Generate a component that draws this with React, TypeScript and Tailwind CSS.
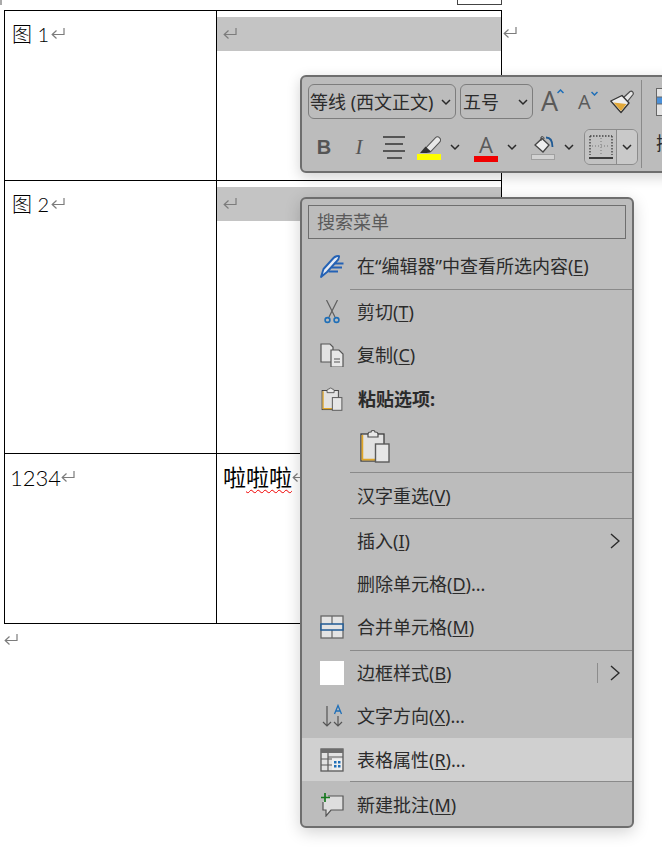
import React from 'react';

const UI_FONT = "font-['Noto_Sans','Noto_Sans_CJK_SC',sans-serif]";

function ReturnMark({ className = '' }: { className?: string }) {
  return (
    <svg className={`w-[14px] h-[14px] shrink-0 ${className}`} viewBox="0 0 14 14" fill="none" stroke="#7c7c7c" strokeWidth="1.2">
      <path d="M13 1 V7.5 H1.5" />
      <path d="M5.5 3.5 L1.2 7.5 L5.5 11.5" />
    </svg>
  );
}

function Chevron({ className = '' }: { className?: string }) {
  return (
    <svg className={`w-[10px] h-[8px] shrink-0 ${className}`} viewBox="0 0 10 8" fill="none" stroke="#2a2a2a" strokeWidth="1.5">
      <path d="M1 2 L5 6 L9 2" />
    </svg>
  );
}

function SubArrow() {
  return (
    <svg className="w-[10px] h-[16px]" viewBox="0 0 10 16" fill="none" stroke="#2a2a2a" strokeWidth="1.4">
      <path d="M1 1 L9 8 L1 15" />
    </svg>
  );
}

function PenIcon() {
  return (
    <svg className="w-6 h-6" viewBox="0 0 24 24" fill="none">
      <path d="M1 23 L3.5 15 L13.5 4 C15 2.5 18 1.5 19 2 C19.5 4 18 6 16 8 L7 18 Z" fill="#e6ecf5" stroke="#2462b5" strokeWidth="1.9" strokeLinejoin="round" />
      <path d="M14.5 9.5 H23.5 M11.5 13.5 H22 M8.5 17.5 H18" stroke="#2462b5" strokeWidth="2" />
    </svg>
  );
}

function ScissorsIcon() {
  return (
    <svg className="w-6 h-6" viewBox="0 0 24 24" fill="none">
      <path d="M6.5 0 L15 17 M17.5 0 L9 17" stroke="#5f5f5f" strokeWidth="1.2" />
      <circle cx="7.5" cy="20" r="2.4" stroke="#1f6fb8" strokeWidth="1.6" />
      <circle cx="16.5" cy="20" r="2.4" stroke="#1f6fb8" strokeWidth="1.6" />
    </svg>
  );
}

function CopyIcon() {
  return (
    <svg className="w-6 h-6" viewBox="0 0 24 24" fill="none">
      <path d="M1 1 H10 L13 4 V19 H1 Z" fill="#e2e2e2" stroke="#555" strokeWidth="1.2" />
      <path d="M11 7 H19 L23 11 V24 H11 Z" fill="#e8e8e8" stroke="#555" strokeWidth="1.2" />
      <path d="M14 16 H20 M14 19 H20" stroke="#555" strokeWidth="1.1" />
    </svg>
  );
}

function PasteIcon({ className }: { className: string }) {
  return (
    <svg className={className} viewBox="0 0 30 34" fill="none">
      <rect x="1" y="5" width="23" height="27" fill="#e2e2e2" stroke="#3c3c3c" strokeWidth="1.3" />
      <path d="M2.4 6 V30.6 H15" stroke="#e0a628" strokeWidth="1.7" />
      <path d="M8 5 C8 3 10 3 11 3 C11 1 15 1 15 3 C16 3 18 3 18 5 V8 H8 Z" fill="#e8e8e8" stroke="#4a4a4a" strokeWidth="1.2" />
      <rect x="15.5" y="15" width="13.5" height="18" fill="#e6e6e6" stroke="#5a5a5a" strokeWidth="1.4" />
    </svg>
  );
}

function MergeIcon() {
  return (
    <svg className="w-6 h-6" viewBox="0 0 24 24" fill="none">
      <rect x="1" y="1" width="22" height="22" fill="#e4e4e4" stroke="#666" strokeWidth="1.3" />
      <path d="M12 1 V23" stroke="#666" strokeWidth="1.2" />
      <rect x="1" y="9" width="22" height="6" fill="#e4e4e4" stroke="#1f5a94" strokeWidth="1.5" />
    </svg>
  );
}

function DirectionIcon() {
  return (
    <svg className="w-6 h-6" viewBox="0 0 24 24" fill="none">
      <path d="M7 2 V22 M3 18 L7 22 L11 18" stroke="#555" strokeWidth="1.2" />
      <path d="M18 12 V22 M14 18 L18 22 L22 18" stroke="#555" strokeWidth="1.2" />
      <path d="M14.5 10 L18 1.5 L21.5 10 M15.8 7 H20.2" stroke="#1f6fb8" strokeWidth="1.3" />
    </svg>
  );
}

function TablePropsIcon() {
  return (
    <svg className="w-6 h-6" viewBox="0 0 24 24" fill="none">
      <rect x="1" y="1" width="22" height="22" fill="#e2e2e2" stroke="#5a5a5a" strokeWidth="1.3" />
      <rect x="1" y="1" width="22" height="4" fill="#6c6c6c" />
      <path d="M1 11 H12 M1 17 H12 M8 5 V23 M8 9 H23" stroke="#5a5a5a" strokeWidth="1.2" />
      <rect x="12" y="11" width="10" height="11" fill="#eeeeee" />
      <rect x="14" y="13" width="2.5" height="2.5" fill="#1f6fb8" />
      <rect x="18" y="13" width="2.5" height="2.5" fill="#1f6fb8" />
      <rect x="14" y="17" width="2.5" height="2.5" fill="#1f6fb8" />
      <rect x="18" y="17" width="2.5" height="2.5" fill="#1f6fb8" />
    </svg>
  );
}

function CommentIcon() {
  return (
    <svg className="w-6 h-6" viewBox="0 0 24 24" fill="none">
      <path d="M8 3 H23 V17 H11 L6 23 V17 H3 V9" fill="#dedede" stroke="#555" strokeWidth="1.2" />
      <path d="M5 0 V9 M1 4.5 H10" stroke="#17791f" strokeWidth="1.7" />
    </svg>
  );
}

function BrushIcon() {
  return (
    <svg className="w-6 h-6" viewBox="0 0 24 24" fill="none">
      <path d="M13 8 L20 1.5 C22 0.5 24 2.5 23 4.5 L17 12" fill="#e6e6e6" stroke="#4a4a4a" strokeWidth="1.2" />
      <path d="M0.8 11 L12 5.5 L19 13 L11 22.5 Z" fill="#efefef" stroke="#333" strokeWidth="1.3" strokeLinejoin="round" />
      <path d="M3.5 12.5 L16.5 14 L11 21 Z" fill="#e2a93a" />
    </svg>
  );
}

function HighlightIcon() {
  return (
    <svg className="w-6 h-6" viewBox="0 0 24 24" fill="none">
      <path d="M20.5 4 L12 13" stroke="#555" strokeWidth="7" strokeLinecap="round" />
      <path d="M20.5 4 L12 13" stroke="#e8e8e8" strokeWidth="5" strokeLinecap="round" />
      <path d="M8.5 10.5 L14 15.5 L10 17 L3 17 Z" fill="#333" />
      <rect x="0" y="18" width="24" height="6" fill="#ffff00" />
    </svg>
  );
}

function FillIcon() {
  return (
    <svg className="w-6 h-6" viewBox="0 0 24 24" fill="none">
      <path d="M4 9 L11 2.5 L18 9 L12 16 Z" fill="#eeeeee" stroke="#444" strokeWidth="1.3" />
      <path d="M10 5 V1 C12 0 13 1 13 3" stroke="#444" strokeWidth="1" />
      <path d="M15 1.5 C19 1.5 21.5 5 21.5 11" stroke="#1f5a94" strokeWidth="1.8" />
      <rect x="0.5" y="18.5" width="23" height="5" fill="#d2d2d2" stroke="#a0a0a0" />
    </svg>
  );
}

function BorderIcon() {
  return (
    <svg className="w-6 h-6" viewBox="0 0 24 24" fill="none">
      <path d="M1 1 H23 M1 1 V20 M23 1 V20" stroke="#444" strokeWidth="1.4" strokeDasharray="1.5 1.5" />
      <path d="M12 3 V21 M3 11 H21" stroke="#777" strokeWidth="1" strokeDasharray="1 2" />
      <path d="M0 23 H24" stroke="#111" strokeWidth="1.4" />
    </svg>
  );
}

function TableStyleIcon() {
  return (
    <svg className="w-6 h-[28px]" viewBox="0 0 24 28" fill="none">
      <rect x="0.5" y="0.5" width="23" height="27" fill="#e4e4e4" stroke="#666" />
      <rect x="1" y="9" width="22" height="7" fill="#4a90d9" />
      <path d="M1 9 H23 M1 16 H23 M12 1 V27" stroke="#666" />
    </svg>
  );
}

type MenuItem = {
  label: string;
  accel?: string;
  suffix?: string;
  icon?: React.ReactNode;
  height: string;
  sepAfter?: boolean;
  hover?: boolean;
  sub?: 'plain' | 'split';
};

const beforeSep: MenuItem[] = [
  { label: '在“编辑器”中查看所选内容', accel: 'E', icon: <PenIcon />, height: 'h-[50px] pt-[4px]', sepAfter: true },
  { label: '剪切', accel: 'T', icon: <ScissorsIcon />, height: 'h-[44px]' },
  { label: '复制', accel: 'C', icon: <CopyIcon />, height: 'h-[43px] pb-[2px]' },
];

const afterPaste: MenuItem[] = [
  { label: '汉字重选', accel: 'V', height: 'h-[45px]', sepAfter: true },
  { label: '插入', accel: 'I', height: 'h-[44px]', sub: 'plain' },
  { label: '删除单元格', accel: 'D', suffix: '...', height: 'h-[43px] pb-[2px]' },
  { label: '合并单元格', accel: 'M', icon: <MergeIcon />, height: 'h-[44px] pb-[2px]', sepAfter: true },
  { label: '边框样式', accel: 'B', icon: <div className="w-6 h-6 bg-white" />, height: 'h-[44px]', sub: 'split' },
  { label: '文字方向', accel: 'X', suffix: '...', icon: <DirectionIcon />, height: 'h-[43px] pb-[2px]' },
  { label: '表格属性', accel: 'R', suffix: '...', icon: <TablePropsIcon />, height: 'h-[43px]', hover: true, sepAfter: true },
  { label: '新建批注', accel: 'M', icon: <CommentIcon />, height: 'h-[44px] pt-[2px]' },
];

function Row({ item }: { item: MenuItem }) {
  return (
    <>
      <div className={`flex items-center shrink-0 pl-[18px] pr-[12px] ${item.height} ${item.hover ? 'bg-[#d0d0d0]' : ''}`}>
        <div className="w-6 h-6 shrink-0 flex items-center justify-center">{item.icon}</div>
        <span className="ml-[13px] text-[18px] leading-none text-[#2b2b2b] whitespace-nowrap">
          {item.label}(<span className="underline underline-offset-2">{item.accel}</span>){item.suffix}
        </span>
        {item.sub === 'plain' && (
          <div className="ml-auto">
            <SubArrow />
          </div>
        )}
        {item.sub === 'split' && (
          <div className="ml-auto flex items-center gap-[12px]">
            <div className="w-px h-5 bg-[#8c8c8c]" />
            <SubArrow />
          </div>
        )}
      </div>
      {item.sepAfter && <div className="h-px shrink-0 ml-[48px] bg-[#8a8a8a]" />}
    </>
  );
}

function Toolbar() {
  return (
    <div className={`absolute left-[300px] top-[75px] w-[420px] h-[98px] flex rounded-[6px] border-2 border-[#6e6e6e] bg-[#bcbcbc] shadow-[0_4px_14px_rgba(0,0,0,0.18)] ${UI_FONT}`}>
      <div className="w-[339px] shrink-0 pl-[6px] pt-[7px]">
        <div className="flex items-center h-[35px]">
          <div className="w-[148px] h-full flex items-center justify-between pl-[1px] pr-[4px] rounded-[6px] border border-[#7d7d7d]">
            <span className="text-[18px] leading-none text-[#2b2b2b] whitespace-nowrap">等线 (西文正文)</span>
            <Chevron />
          </div>
          <div className="ml-[4px] w-[73px] h-full flex items-center justify-between pl-[2px] pr-[4px] rounded-[6px] border border-[#7d7d7d]">
            <span className="text-[18px] leading-none text-[#2b2b2b]">五号</span>
            <Chevron />
          </div>
          <div className="ml-[8px] w-[25px] flex items-start -mt-[3px]">
            <span className="font-['Open_Sans',sans-serif] font-normal text-[27px] leading-none text-[#5a5a5a]">A</span>
            <svg className="w-[7px] h-[5px] mt-[2px] -ml-[1px] shrink-0" viewBox="0 0 7 5" fill="none" stroke="#1f6fb8" strokeWidth="1.5"><path d="M0.5 4 L3.5 1 L6.5 4" /></svg>
          </div>
          <div className="ml-[12px] w-[21px] flex items-start">
            <span className="font-['Open_Sans',sans-serif] font-normal text-[20px] leading-none text-[#5a5a5a]">A</span>
            <svg className="w-[7px] h-[5px] -mt-[1px] shrink-0" viewBox="0 0 7 5" fill="none" stroke="#1f6fb8" strokeWidth="1.5"><path d="M0.5 1 L3.5 4 L6.5 1" /></svg>
          </div>
          <div className="ml-[11px]">
            <BrushIcon />
          </div>
        </div>
        <div className="flex items-center h-[36px] mt-[10px] ml-[4px]">
          <span className="w-6 text-center font-['Liberation_Sans',sans-serif] font-bold text-[20px] leading-none text-[#555]">B</span>
          <span className="ml-[11px] w-6 text-center font-['Liberation_Serif',serif] italic text-[21px] leading-none text-[#555]">I</span>
          <div className="ml-[11px] w-6 flex flex-col items-center gap-[5px]">
            <div className="h-[2px] w-[22px] bg-[#555]" />
            <div className="h-[2px] w-[18px] bg-[#555]" />
            <div className="h-[2px] w-[22px] bg-[#555]" />
            <div className="h-[2px] w-[15px] bg-[#555]" />
          </div>
          <div className="ml-[11px] mt-[1px]">
            <HighlightIcon />
          </div>
          <Chevron className="ml-[9px]" />
          <div className="ml-[14px] w-6 flex flex-col items-center">
            <span className="font-['Open_Sans',sans-serif] font-normal text-[22px] leading-[24px] text-[#5a5a5a]">A</span>
            <div className="w-6 h-[6px] bg-[#f00000]" />
          </div>
          <Chevron className="ml-[9px]" />
          <div className="ml-[14px] mt-[1px]">
            <FillIcon />
          </div>
          <Chevron className="ml-[9px]" />
          <div className="ml-[10px] w-[54px] h-full flex rounded-[6px] border border-[#8c8c8c] overflow-hidden">
            <div className="w-[31px] flex items-center justify-center bg-[#c2c2c2]">
              <BorderIcon />
            </div>
            <div className="flex-1 flex items-center justify-center bg-[#c9c9c9] border-l border-[#8c8c8c]">
              <Chevron />
            </div>
          </div>
        </div>
      </div>
      <div className="w-px my-[3px] bg-[#8a8a8a]" />
      <div className="pl-[14px] pt-[11px] flex flex-col">
        <TableStyleIcon />
        <span className="mt-[18px] text-[18px] leading-none text-[#2b2b2b]">插入</span>
      </div>
    </div>
  );
}

function ContextMenu() {
  return (
    <div className={`absolute left-[300px] top-[197px] w-[334px] h-[631px] flex flex-col rounded-[6px] border-2 border-[#6e6e6e] bg-[#bcbcbc] shadow-[0_4px_16px_rgba(0,0,0,0.18)] overflow-hidden ${UI_FONT}`}>
      <div className="mt-[6px] mx-[6px] h-[34px] shrink-0 flex items-center pl-[8px] border border-[#6e6e6e]">
        <span className="text-[18px] leading-none text-[#5a5a5a]">搜索菜单</span>
      </div>
      {beforeSep.map((item) => (
        <Row key={item.label} item={item} />
      ))}
      <div className="h-[43px] shrink-0 flex items-center pl-[18px]">
        <div className="w-6 h-6 flex items-center justify-center">
          <PasteIcon className="w-[22px] h-[24px]" />
        </div>
        <span className="ml-[14px] text-[18px] leading-none font-bold text-[#2b2b2b]">粘贴选项:</span>
      </div>
      <div className="h-[52px] shrink-0 flex items-center pl-[58px]">
        <PasteIcon className="w-[30px] h-[34px]" />
      </div>
      <div className="h-px shrink-0 ml-[48px] bg-[#8a8a8a]" />
      {afterPaste.map((item) => (
        <Row key={item.label} item={item} />
      ))}
    </div>
  );
}

export default function App() {
  const docFont = "font-['Lato','Noto_Sans_CJK_SC',sans-serif]";
  return (
    <div className={`relative w-[662px] h-[854px] overflow-hidden bg-white ${docFont}`}>
      {/* bits of the page above the table */}
      <div className="flex h-[5px]">
        <div className="w-[2px] bg-[#aaaaaa]" />
        <div className="ml-[455px] w-[45px] border-x border-b border-[#444]" />
      </div>
      <div className="mt-[5px] ml-[4px] w-[498px] border border-black grid grid-cols-[212px_284px] grid-rows-[170px_273px_169px] text-black">
        <div className="border-r border-b border-black pl-[7px] pt-[9px]">
          <div className="flex items-center h-[28px] text-[20px] font-light">图 1<ReturnMark className="ml-[2px]" /></div>
        </div>
        <div className="relative border-b border-black pt-[6px]">
          <div className="h-[34px] bg-[#c4c4c4] flex items-center pl-[6px]"><ReturnMark /></div>
          <ReturnMark className="absolute left-[286px] top-[15px]" />
        </div>
        <div className="border-r border-b border-black pl-[7px] pt-[9px]">
          <div className="flex items-center h-[28px] text-[20px] font-light">图 2<ReturnMark className="ml-[2px]" /></div>
        </div>
        <div className="relative border-b border-black pt-[6px]">
          <div className="h-[34px] bg-[#c4c4c4] flex items-center pl-[6px]"><ReturnMark /></div>
          <ReturnMark className="absolute left-[286px] top-[15px]" />
        </div>
        <div className="border-r border-black pl-[5px] pt-[9px]">
          <div className="flex items-center h-[28px] text-[22px] font-light">1234<ReturnMark /></div>
        </div>
        <div className="pl-[6px] pt-[9px]">
          <div className="flex items-center h-[28px] text-[23px] leading-none whitespace-nowrap">
            啦<span className="underline decoration-wavy decoration-[#f00000] decoration-1 underline-offset-[3px]">啦啦</span><ReturnMark />
          </div>
        </div>
      </div>
      <ReturnMark className="mt-[9px] ml-[4px]" />
      <Toolbar />
      <ContextMenu />
    </div>
  );
}
